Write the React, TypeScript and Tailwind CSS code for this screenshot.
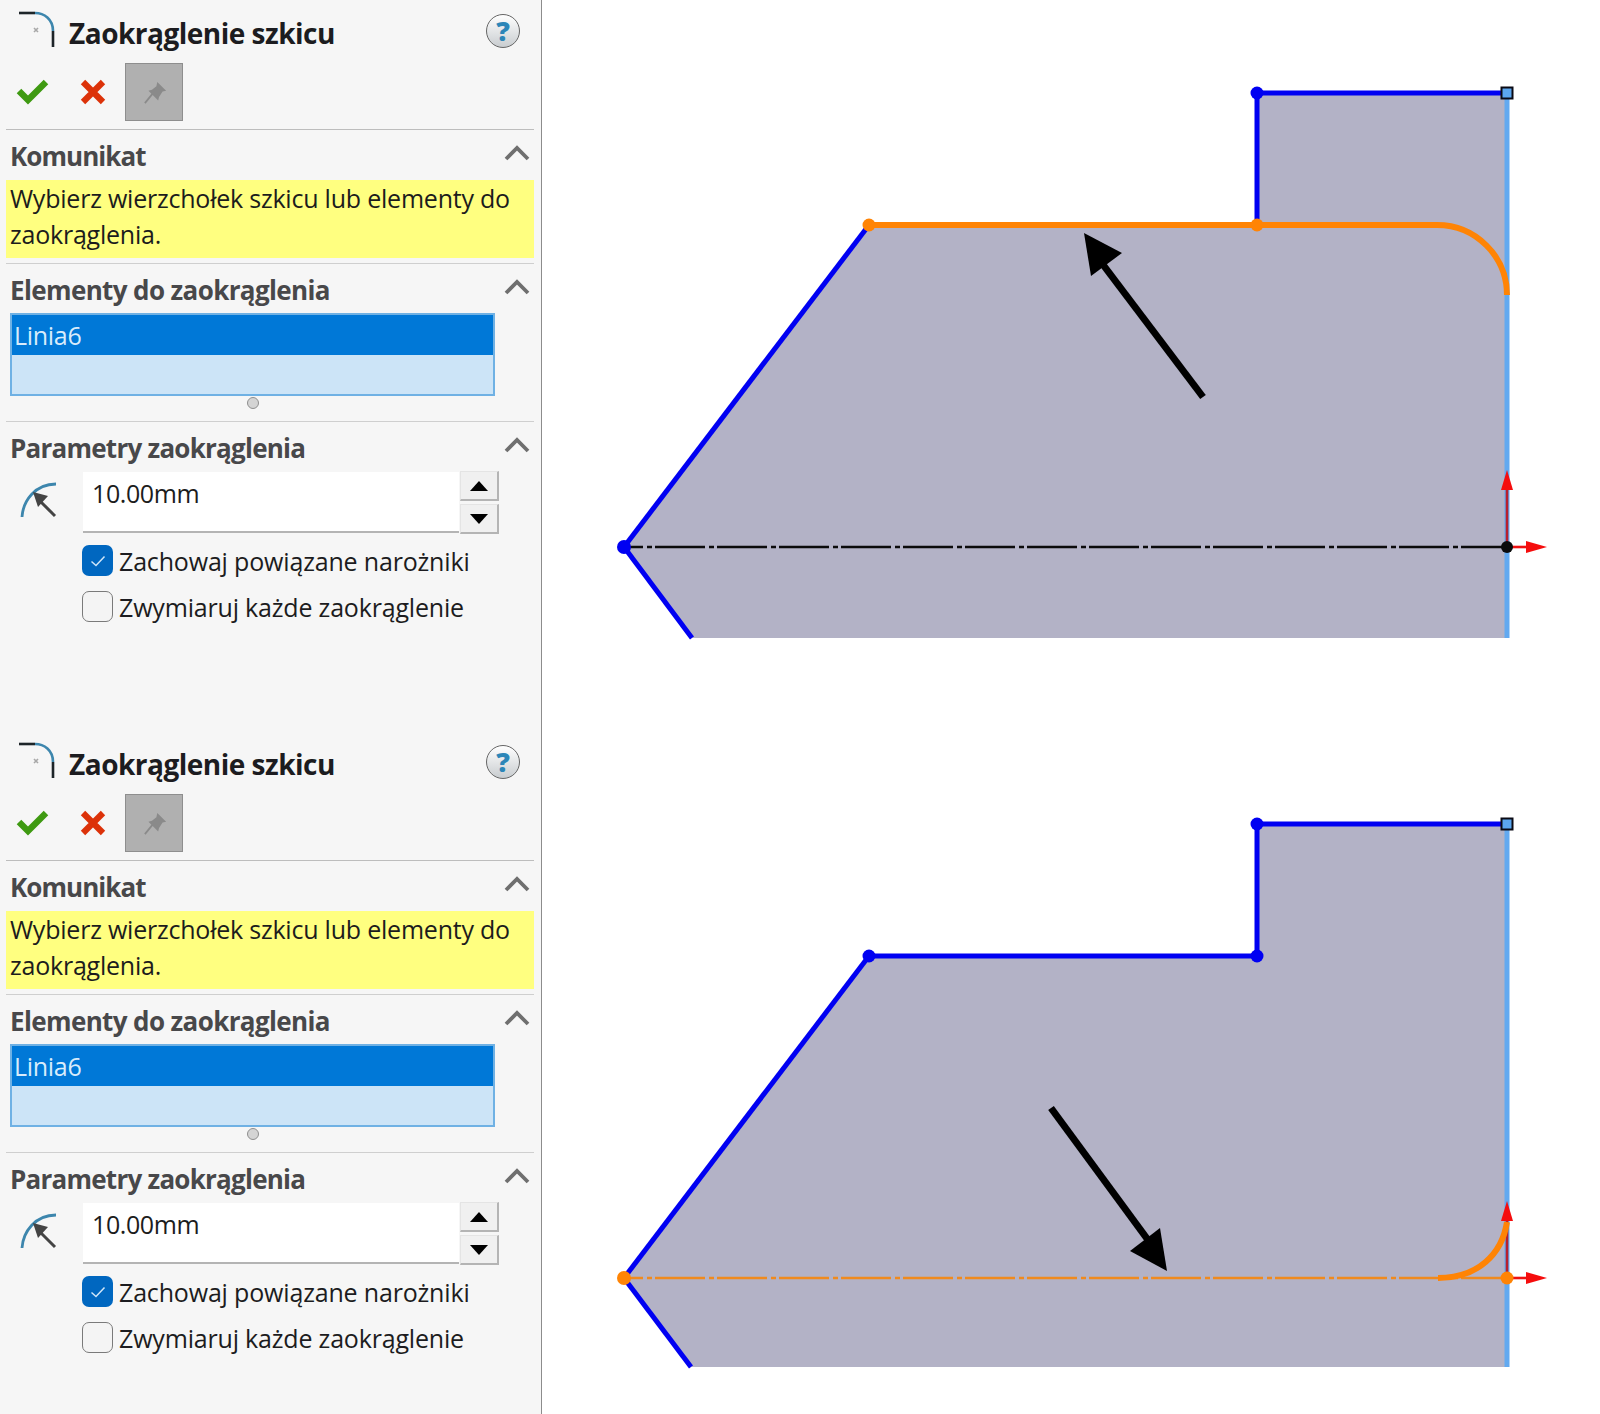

import React from "react";

const FONT = "font-['Open_Sans','Noto_Sans',sans-serif]";

function Chevron() {
  return (
    <svg width="26" height="18" viewBox="0 0 26 18" className="block">
      <polyline points="2,15 13,4 24,15" fill="none" stroke="#6f6f6f" strokeWidth="3.8" />
    </svg>
  );
}

function SectionHeader({ title, h, track }: { title: string; h: string; track: string }) {
  return (
    <div className={`flex items-center justify-between pl-1 pr-[4px] ${h}`}>
      <span className={`mt-[2px] text-[26px] leading-[34px] font-bold text-[#48484a] ${track}`}>{title}</span>
      <span className="-mt-[4px]"><Chevron /></span>
    </div>
  );
}

function FilletIcon() {
  return (
    <svg width="40" height="40" viewBox="0 0 40 40" className="block">
      <path d="M3 36 C4 20 16 3 37 3" fill="none" stroke="#3d86ad" strokeWidth="2.8" />
      <path d="M36 35 L19 18" stroke="#444" strokeWidth="3" />
      <path d="M14 11 L29 15 L19 26 Z" fill="#444" />
    </svg>
  );
}

function SketchFilletIcon() {
  return (
    <svg width="38" height="38" viewBox="0 0 38 38" className="block">
      <path d="M1 2 H17" stroke="#1d2428" strokeWidth="2.6" fill="none" />
      <path d="M17 2 C26 2 35 8 35 20" stroke="#3d86ad" strokeWidth="2.6" fill="none" />
      <path d="M35 20 V36" stroke="#1d2428" strokeWidth="2.6" fill="none" />
      <path d="M16 17 L20 21 M20 17 L16 21" stroke="#a8a8a8" strokeWidth="1.6" />
    </svg>
  );
}

function Panel({ h }: { h: string }) {
  return (
    <div className={`w-[542px] shrink-0 bg-[#f6f6f6] border-r border-[#8c8c8c] pl-[6px] pr-[7px] ${h}`}>
      <div className="flex items-center h-[63px] relative">
        <span className="ml-[12px] -mt-[3px]"><SketchFilletIcon /></span>
        <span className="ml-[13px] mt-[3px] text-[28px] leading-[36px] font-bold text-[#1c1c20] tracking-[-0.5px]">Zaokrąglenie szkicu</span>
        <span className="absolute left-[480px] top-[14px] w-[34px] h-[34px] rounded-full border border-[#666] bg-linear-to-b from-white to-[#c9cdd0] flex items-center justify-center text-[27px] leading-[30px] font-extrabold text-[#2c86b8]">?</span>
      </div>
      <div className="flex items-start h-[66px]">
        <svg width="34" height="28" viewBox="0 0 34 28" className="ml-[10px] mt-[14px] block">
          <path d="M3 14 L12 23 L30 5" fill="none" stroke="#3f9a12" strokeWidth="6.4" />
        </svg>
        <svg width="28" height="28" viewBox="0 0 28 28" className="ml-[29px] mt-[15px] block">
          <path d="M4 4 L24 24 M24 4 L4 24" fill="none" stroke="#dc3209" strokeWidth="6.2" />
        </svg>
        <div className="ml-[18px] w-[58px] h-[58px] bg-[#b0b0b0] border border-[#8e8e8e] flex items-center justify-center">
          <svg width="23" height="23" viewBox="0 0 26 26" className="block ml-[2px]">
            <path d="M1 25 L10 14" stroke="#8a8a8a" strokeWidth="2" />
            <path d="M15 1 L25 11 L21 12 L17 18 L16 22 L5 11 L9 10 L14 6 Z" fill="#8a8a8a" />
          </svg>
        </div>
      </div>
      <div className="h-[1px] bg-[#bdbdbd]" />
      <SectionHeader title="Komunikat" h="h-[50px]" track="tracking-[-0.95px]" />
      <div className="h-[78px] bg-[#ffff80] pl-1 text-[25px] leading-[36px] text-[#1c1c1c] tracking-[-0.22px]">
        Wybierz wierzchołek szkicu lub elementy do zaokrąglenia.
      </div>
      <div className="h-[5px]" />
      <div className="h-[1px] bg-[#cfcfcf]" />
      <SectionHeader title="Elementy do zaokrąglenia" h="h-[49px]" track="tracking-[-0.62px]" />
      <div className="ml-1 w-[485px] h-[83px] border-2 border-[#6fb1e4] bg-[#cce4f7]">
        <div className="h-[40px] bg-[#0078d7] pl-[2px] pt-[1px] text-[25px] leading-[38px] text-[#d8ecfb] tracking-[-0.3px]">Linia6</div>
      </div>
      <div className="h-[25px] relative">
        <span className="absolute left-[241px] top-[1px] w-[12px] h-[12px] rounded-full bg-[#d4d4d4] border border-[#8f8f8f]" />
      </div>
      <div className="h-[1px] bg-[#cfcfcf]" />
      <SectionHeader title="Parametry zaokrąglenia" h="h-[50px]" track="tracking-[-0.76px]" />
      <div className="flex items-start h-[61px]">
        <span className="ml-[13px] mt-[9px] w-[64px]"><FilletIcon /></span>
        <div className="w-[376px] h-[61px] bg-white border-b-2 border-[#b4b4b4] pl-[9px] text-[25px] leading-[42px] text-[#1c1c1c] tracking-[-0.4px]">10.00mm</div>
        <div className="ml-[1px] -mt-[1px] w-[39px] flex flex-col gap-[3px]">
          <div className="h-[30px] bg-[#f0f0f0] border-t border-l border-[#e4e4e4] border-r-2 border-b-2 border-r-[#b4b4b4] border-b-[#b4b4b4] flex items-center justify-center">
            <svg width="18" height="10" viewBox="0 0 18 10" className="block"><path d="M9 0 L18 10 H0 Z" fill="#000" /></svg>
          </div>
          <div className="h-[30px] bg-[#f0f0f0] border-t border-l border-[#e4e4e4] border-r-2 border-b-2 border-r-[#b4b4b4] border-b-[#b4b4b4] flex items-center justify-center">
            <svg width="18" height="10" viewBox="0 0 18 10" className="block"><path d="M0 0 H18 L9 10 Z" fill="#000" /></svg>
          </div>
        </div>
      </div>
      <div className="ml-[76px] mt-[12px] flex items-center h-[31px]">
        <div className="w-[31px] h-[31px] rounded-[7px] bg-[#0067c0] flex items-center justify-center">
          <svg width="16" height="12" viewBox="0 0 16 12" className="block">
            <path d="M1.5 6.5 L6 10.5 L14.5 1.5" fill="none" stroke="#cfe6f8" strokeWidth="1.5" />
          </svg>
        </div>
        <span className="ml-[6px] text-[25px] leading-[36px] text-[#1c1c20] tracking-[-0.17px]">Zachowaj powiązane narożniki</span>
      </div>
      <div className="ml-[76px] mt-[15px] flex items-center h-[31px]">
        <div className="w-[31px] h-[31px] rounded-[7px] bg-[#f4f4f4] border-[1.5px] border-[#7a7a7a]" />
        <span className="ml-[6px] text-[25px] leading-[36px] text-[#1c1c20] tracking-[-0.18px]">Zwymiaruj każde zaokrąglenie</span>
      </div>
    </div>
  );
}

const BLUE = "#0000f2";
const ORANGE = "#ff8405";
const FILL = "#b3b2c6";
const DASH = "50 4 5 3";

function Axes({ y, tipY, baseY }: { y: number; tipY: number; baseY: number }) {
  return (
    <>
      <path d={`M1507 ${y} V${baseY}`} stroke="#b8202e" strokeWidth="2.6" />
      <path d={`M1507 ${tipY} L1513 ${baseY} H1501 Z`} fill="#f50d0d" />
      <path d={`M1507 ${y} H1527`} stroke="#ee1111" strokeWidth="2.6" />
      <path d={`M1547 ${y} L1526 ${y - 6} V${y + 6} Z`} fill="#f50d0d" />
    </>
  );
}

function TopSketch() {
  return (
    <svg viewBox="542 0 1058 731" className="block w-[1058px] h-[731px] bg-white">
      <path d="M624 547 L869 225 H1257 V93 H1509 V638 H693 Z" fill={FILL} />
      <path d="M1507 93 V638" stroke="#62a9f0" strokeWidth="5" />
      <path d="M1257 93 H1507" stroke={BLUE} strokeWidth="5" />
      <path d="M1257 93 V225" stroke={BLUE} strokeWidth="5" />
      <path d="M624 547 L869 225" stroke={BLUE} strokeWidth="5" />
      <path d="M624 547 L692 638" stroke={BLUE} strokeWidth="5" />
      <path d="M869 225 H1437 A70 70 0 0 1 1507 295" fill="none" stroke={ORANGE} strokeWidth="6" />
      <path d="M630 547 H1507" stroke="#0b0b0b" strokeWidth="2.6" strokeDasharray={DASH} strokeDashoffset="37" />
      <circle cx="624" cy="547" r="7" fill={BLUE} />
      <circle cx="869" cy="225" r="6.5" fill={ORANGE} />
      <circle cx="1257" cy="225" r="6.5" fill={ORANGE} />
      <circle cx="1257" cy="93" r="6.5" fill={BLUE} />
      <rect x="1501.5" y="87.5" width="11" height="11" fill="#5ba6ee" stroke="#0a0a14" strokeWidth="2" />
      <Axes y={547} tipY={470} baseY={490} />
      <circle cx="1507" cy="547" r="6" fill="#0b0b0b" />
      <path d="M1203 397 L1101 262" stroke="#000" strokeWidth="7" />
      <path d="M1084 233 L1122 253 L1091 276 Z" fill="#000" />
    </svg>
  );
}

function BottomSketch() {
  return (
    <svg viewBox="542 731 1058 683" className="block w-[1058px] h-[683px] bg-white">
      <path d="M624 1278 L869 956 H1257 V824 H1509 V1367 H692 Z" fill={FILL} />
      <path d="M1507 824 V1367" stroke="#62a9f0" strokeWidth="5" />
      <path d="M1257 824 H1507" stroke={BLUE} strokeWidth="5" />
      <path d="M1257 824 V956" stroke={BLUE} strokeWidth="5" />
      <path d="M869 956 H1257" stroke={BLUE} strokeWidth="5" />
      <path d="M624 1278 L869 956" stroke={BLUE} strokeWidth="5" />
      <path d="M624 1278 L691 1367" stroke={BLUE} strokeWidth="5" />
      <Axes y={1278} tipY={1201} baseY={1221} />
      <path d="M630 1278 H1507" stroke="#f08a1e" strokeWidth="2.6" strokeDasharray={DASH} strokeDashoffset="37" />
      <path d="M1438 1278 C1478 1278 1502 1254 1507 1222" fill="none" stroke={ORANGE} strokeWidth="6" />
      <circle cx="624" cy="1278" r="7" fill={ORANGE} />
      <circle cx="869" cy="956" r="6.5" fill={BLUE} />
      <circle cx="1257" cy="956" r="6.5" fill={BLUE} />
      <circle cx="1257" cy="824" r="6.5" fill={BLUE} />
      <circle cx="1507" cy="1278" r="6.5" fill={ORANGE} />
      <rect x="1501.5" y="818.5" width="11" height="11" fill="#5ba6ee" stroke="#0a0a14" strokeWidth="2" />
      <path d="M1051 1108 L1148 1240" stroke="#000" strokeWidth="7" />
      <path d="M1167 1271 L1130 1251 L1160 1228 Z" fill="#000" />
    </svg>
  );
}

export default function App() {
  return (
    <div className={`w-[1600px] h-[1414px] bg-white overflow-hidden ${FONT}`}>
      <div className="flex h-[731px]">
        <Panel h="h-[731px]" />
        <TopSketch />
      </div>
      <div className="flex h-[683px]">
        <Panel h="h-[683px]" />
        <BottomSketch />
      </div>
    </div>
  );
}
